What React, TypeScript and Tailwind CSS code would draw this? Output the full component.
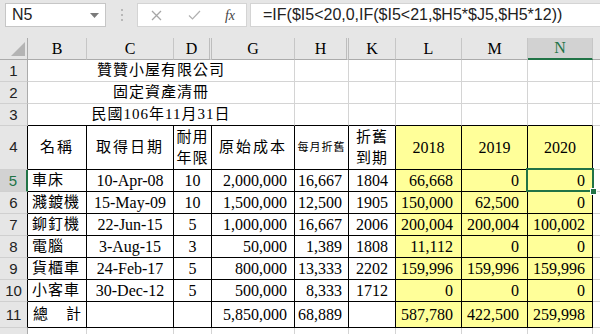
import React from 'react';

const rows = [
  { n: 5, name: '車床', date: '10-Apr-08', life: '10', cost: '2,000,000', monthly: '16,667', due: '1804', y18: '66,668', y19: '0', y20: '0' },
  { n: 6, name: '濺鍍機', date: '15-May-09', life: '10', cost: '1,500,000', monthly: '12,500', due: '1905', y18: '150,000', y19: '62,500', y20: '0' },
  { n: 7, name: '鉚釘機', date: '22-Jun-15', life: '5', cost: '1,000,000', monthly: '16,667', due: '2006', y18: '200,004', y19: '200,004', y20: '100,002' },
  { n: 8, name: '電腦', date: '3-Aug-15', life: '3', cost: '50,000', monthly: '1,389', due: '1808', y18: '11,112', y19: '0', y20: '0' },
  { n: 9, name: '貨櫃車', date: '24-Feb-17', life: '5', cost: '800,000', monthly: '13,333', due: '2202', y18: '159,996', y19: '159,996', y20: '159,996' },
  { n: 10, name: '小客車', date: '30-Dec-12', life: '5', cost: '500,000', monthly: '8,333', due: '1712', y18: '0', y19: '0', y20: '0' },
];

const rowHead = "bg-[#e6e6e6] text-center align-middle border-b border-r border-b-[#d0d0d0] font-['Liberation_Sans',sans-serif] text-[15px] text-[#222]";
const cell = 'border-r border-b border-black align-middle';
const grid = 'border-r border-b border-[#d4d4d4]';
const yellow = 'bg-[#ffff99]';

function FormulaBar() {
  return (
    <div className="h-[38px] bg-[#e6e6e6] pt-[3px] flex items-start font-['Liberation_Sans',sans-serif] text-[#222]">
      <div className="ml-[5px] w-[101px] h-[24px] bg-white border border-[#c6c6c6] flex items-center justify-between pl-[6px] pr-[6px] text-[16px]">
        <span>N5</span>
        <svg width="9" height="5" viewBox="0 0 9 5"><path d="M0 0h9L4.5 5z" fill="#7a7a7a" /></svg>
      </div>
      <div className="w-[31px] h-[24px] flex flex-col items-center justify-center gap-[3px]">
        <span className="w-[2px] h-[2px] bg-[#b8b8b8]" />
        <span className="w-[2px] h-[2px] bg-[#b8b8b8]" />
        <span className="w-[2px] h-[2px] bg-[#b8b8b8]" />
      </div>
      <div className="w-[110px] h-[24px] bg-white border border-[#d4d4d4] flex items-center">
        <div className="w-[36px] flex justify-center">
          <svg width="11" height="11" viewBox="0 0 11 11"><path d="M1 1l9 9M10 1l-9 9" stroke="#a6a6a6" strokeWidth="1.3" /></svg>
        </div>
        <div className="w-[40px] flex justify-center">
          <svg width="13" height="10" viewBox="0 0 13 10"><path d="M1 5.5l3.5 3.5L12 1" stroke="#b0b0b0" strokeWidth="1.2" fill="none" /></svg>
        </div>
        <div className="flex-1 flex justify-center font-['Liberation_Serif',serif] italic text-[14px] text-[#444]">fx</div>
      </div>
      <div className="ml-[3px] flex-1 h-[24px] bg-white border-y border-l border-[#d4d4d4] flex items-center pl-[12px] text-[16px] whitespace-nowrap">
        =IF($I5&lt;20,0,IF($I5&lt;21,$H5*$J5,$H5*12))
      </div>
    </div>
  );
}

function ColHead({ label, extra = '' }: { label: string; extra?: string }) {
  return (
    <th className={`h-[22px] bg-[#e6e6e6] border-b border-b-[#ababab] border-r border-r-[#c6c6c6] font-normal align-middle ${extra}`}>
      {label}
    </th>
  );
}

export default function App() {
  return (
    <div className="w-[600px] h-[334px] overflow-hidden bg-white">
      <FormulaBar />
      <table className="table-fixed border-separate border-spacing-0 w-[600px] font-['Liberation_Serif','Noto_Sans_CJK_TC',serif] text-[16px] text-black leading-none">
        <colgroup>
          <col className="w-[28px]" />
          <col className="w-[59px]" />
          <col className="w-[87px]" />
          <col className="w-[38px]" />
          <col className="w-[83px]" />
          <col className="w-[54px]" />
          <col className="w-[47px]" />
          <col className="w-[66px]" />
          <col className="w-[66px]" />
          <col className="w-[65px]" />
          <col className="w-[7px]" />
        </colgroup>
        <thead>
          <tr>
            <th className="h-[22px] bg-[#e6e6e6] border-b border-b-[#ababab] border-r border-r-[#ababab] relative">
              <svg className="absolute left-[11px] top-[4px]" width="14" height="14" viewBox="0 0 14 14"><path d="M14 0v14H0z" fill="#b4b4b4" /></svg>
            </th>
            <ColHead label="B" />
            <ColHead label="C" />
            <ColHead label="D" extra="!border-r-[3px] !border-r-[#bdbdbd] border-double" />
            <ColHead label="G" />
            <ColHead label="H" extra="!border-r-[3px] !border-r-[#bdbdbd] border-double" />
            <ColHead label="K" />
            <ColHead label="L" />
            <ColHead label="M" />
            <th className="h-[22px] bg-[#d2d2d2] border-b-2 border-b-[#217346] border-r border-r-[#c6c6c6] font-normal text-[#217346] align-middle">N</th>
            <th className="h-[22px] bg-[#e6e6e6] border-b border-b-[#ababab]" />
          </tr>
        </thead>
        <tbody>
          {[
            { n: 1, text: '贊贊小屋有限公司' },
            { n: 2, text: '固定資產清冊' },
            { n: 3, text: '民國106年11月31日' },
          ].map((r) => {
            const last = r.n === 3;
            const b = last ? 'border-b-black' : '';
            return (
              <tr key={r.n} className="h-[22px]">
                <td className={`${rowHead} border-r-[#ababab]`}>{r.n}</td>
                <td colSpan={4} className={`${grid} ${b} text-center text-[15px] tracking-[1px]`}>{r.text}</td>
                <td className={`${grid} ${b}`} />
                <td className={`${grid} ${b}`} />
                <td className={`${grid} ${b}`} />
                <td className={`${grid} ${b}`} />
                <td className={`${grid} ${b}`} />
                <td className="border-b border-[#d4d4d4]" />
              </tr>
            );
          })}
          <tr className="h-[44px]">
            <td className={`${rowHead} border-r-black align-bottom pb-[3px]`}>4</td>
            <td className={`${cell} text-center text-[15px] tracking-[2px]`}>名稱</td>
            <td className={`${cell} text-center text-[15px] tracking-[2px]`}>取得日期</td>
            <td className={`${cell} text-center text-[15px] tracking-[1px] leading-[21px]`}>耐用<br />年限</td>
            <td className={`${cell} text-center text-[15px] tracking-[2px]`}>原始成本</td>
            <td className={`${cell} text-center text-[11px] tracking-[1px]`}>每月折舊</td>
            <td className={`${cell} text-center text-[15px] tracking-[1px] leading-[21px]`}>折舊<br />到期</td>
            <td className={`${cell} ${yellow} text-center`}>2018</td>
            <td className={`${cell} ${yellow} text-center`}>2019</td>
            <td className={`${cell} ${yellow} text-center`}>2020</td>
            <td className="border-b border-[#d4d4d4]" />
          </tr>
          {rows.map((r) => {
            const sel = r.n === 5;
            return (
              <tr key={r.n} className="h-[22px]">
                <td
                  className={`${rowHead} ${sel ? '!bg-[#d2d2d2] !text-[#217346] border-r-2 border-r-[#217346]' : 'border-r-black'}`}
                >
                  {r.n}
                </td>
                <td className={`${cell} pl-[4px] text-[15px] tracking-[1px]`}>{r.name}</td>
                <td className={`${cell} text-center`}>{r.date}</td>
                <td className={`${cell} text-center`}>{r.life}</td>
                <td className={`${cell} text-right pr-[7px]`}>{r.cost}</td>
                <td className={`${cell} text-right pr-[6px]`}>{r.monthly}</td>
                <td className={`${cell} text-center`}>{r.due}</td>
                <td className={`${cell} ${yellow} text-right pr-[8px]`}>{r.y18}</td>
                <td className={`${cell} ${yellow} text-right pr-[8px]`}>{r.y19}</td>
                <td className={`${cell} ${yellow} text-right pr-[7px] ${sel ? 'relative' : ''}`}>
                  {r.y20}
                  {sel && (
                    <>
                      <div className="absolute -left-[2px] -top-[2px] -right-[2px] -bottom-px border-2 border-[#217346]" />
                      <div className="absolute -right-[5px] -bottom-[4px] w-[7px] h-[7px] bg-[#217346] border border-white" />
                    </>
                  )}
                </td>
                <td className="border-b border-[#d4d4d4]" />
              </tr>
            );
          })}
          <tr className="h-[26px]">
            <td className={`${rowHead} border-r-black`}>11</td>
            <td className={`${cell} text-[15px]`}>
              <div className="flex justify-between pl-[5px] pr-[5px]">
                <span>總</span>
                <span>計</span>
              </div>
            </td>
            <td className={cell} />
            <td className={cell} />
            <td className={`${cell} text-right pr-[7px]`}>5,850,000</td>
            <td className={`${cell} text-right pr-[6px]`}>68,889</td>
            <td className={cell} />
            <td className={`${cell} ${yellow} text-right pr-[8px]`}>587,780</td>
            <td className={`${cell} ${yellow} text-right pr-[8px]`}>422,500</td>
            <td className={`${cell} ${yellow} text-right pr-[7px]`}>259,998</td>
            <td className="border-b border-[#d4d4d4]" />
          </tr>
          <tr className="h-[22px]">
            <td className={`${rowHead} border-r-[#ababab]`} />
            <td className={grid} />
            <td className={grid} />
            <td className={grid} />
            <td className={grid} />
            <td className={grid} />
            <td className={grid} />
            <td className={grid} />
            <td className={grid} />
            <td className={grid} />
            <td className="border-b border-[#d4d4d4]" />
          </tr>
        </tbody>
      </table>
    </div>
  );
}
